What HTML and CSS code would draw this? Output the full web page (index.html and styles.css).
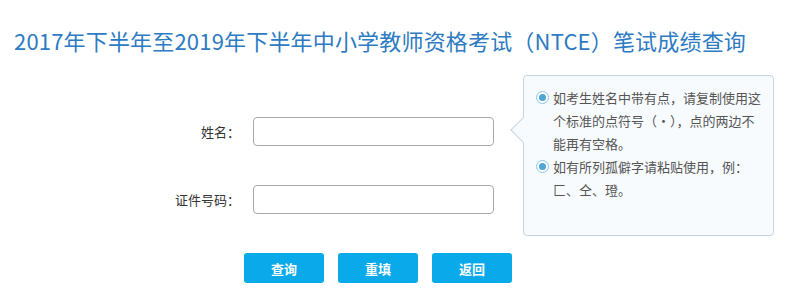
FILE: index.html
```html
<!DOCTYPE html>
<html lang="zh-CN">
<head>
    <meta charset="UTF-8">
    <meta name="viewport" content="width=device-width, initial-scale=1.0">
    <title>NTCE 笔试成绩查询</title>
    <link rel="stylesheet" href="styles.css">
</head>
<body>
    <h1 class="titulo">2017年下半年至2019年下半年中小学教师资格考试（NTCE）笔试成绩查询</h1>

    <div class="principal">
        <!-- Formulario de consulta -->
        <form class="formulario" onsubmit="return false;">
            <div class="fila">
                <label class="etiqueta" for="nombre">姓名：</label>
                <input class="campo" type="text" id="nombre">
            </div>
            <div class="fila">
                <label class="etiqueta" for="documento">证件号码：</label>
                <input class="campo" type="text" id="documento">
            </div>
        </form>

        <!-- Aviso lateral -->
        <div class="aviso">
            <ul>
                <li><span class="punto"></span><span>如考生姓名中带有点，请复制使用这个标准的点符号（·），点的两边不能再有空格。</span></li>
                <li><span class="punto"></span><span>如有所列孤僻字请粘贴使用，例：匚、仝、璒。</span></li>
            </ul>
        </div>
    </div>

    <div class="botones">
        <button type="button">查询</button>
        <button type="button">重填</button>
        <button type="button">返回</button>
    </div>
</body>
</html>
```

FILE: styles.css
```css
body {
    margin: 0;
    font-family: "Noto Sans CJK SC", "Noto Sans", sans-serif;
    background-color: #fff;
    color: #333;
}
.titulo {
    margin: 0;
    padding: 26px 0 0 14px;
    font-size: 22px;
    line-height: 28px;
    letter-spacing: 0.18px;
    font-weight: normal;
    color: #2d7bc2;
}
.principal {
    display: flex;
    margin-top: 21px;
}
.formulario {
    margin: 0 0 0 140px;
    padding-top: 42px;
    display: flex;
    flex-direction: column;
    gap: 39px;
}
.fila {
    display: flex;
    align-items: center;
}
.etiqueta {
    width: 100px;
    text-align: right;
    font-size: 13px;
    margin-right: 13px;
}
.campo {
    width: 241px;
    height: 29px;
    box-sizing: border-box;
    border: 1px solid #a9a9a9;
    border-radius: 4px;
    padding: 0 6px;
    font-size: 13px;
    outline: none;
}
.aviso {
    position: relative;
    margin-left: 29px;
    width: 251px;
    height: 161px;
    box-sizing: border-box;
    background-color: #f8fbfe;
    border: 1px solid #c8d6e4;
    border-radius: 4px;
}
.aviso::before {
    content: "";
    position: absolute;
    left: -10px;
    top: 45px;
    width: 17px;
    height: 17px;
    background-color: #f8fbfe;
    border-left: 1px solid #c8d6e4;
    border-bottom: 1px solid #c8d6e4;
    transform: rotate(45deg);
}
.aviso ul {
    list-style: none;
    margin: 0;
    padding: 10px 10px 0 12px;
}
.aviso li {
    display: flex;
    font-size: 13px;
    line-height: 23px;
    color: #555;
}
.punto {
    flex: none;
    width: 13px;
    height: 13px;
    margin: 5px 4px 0 0;
    box-sizing: border-box;
    border: 1px solid #8cc4e2;
    border-radius: 50%;
    background-color: #fff;
    position: relative;
}
.punto::after {
    content: "";
    position: absolute;
    left: 2px;
    top: 2px;
    width: 7px;
    height: 7px;
    border-radius: 50%;
    background-color: #4ea6d4;
}
.botones {
    display: flex;
    gap: 14px;
    margin: 17px 0 0 244px;
}
button {
    width: 80px;
    height: 30px;
    border: none;
    border-radius: 3px;
    background-color: #0aa9ea;
    color: #fff;
    font-family: "Noto Sans CJK SC", sans-serif;
    font-size: 13px;
    font-weight: bold;
    cursor: pointer;
}
button:hover {
    background-color: #0998d3;
}
```
